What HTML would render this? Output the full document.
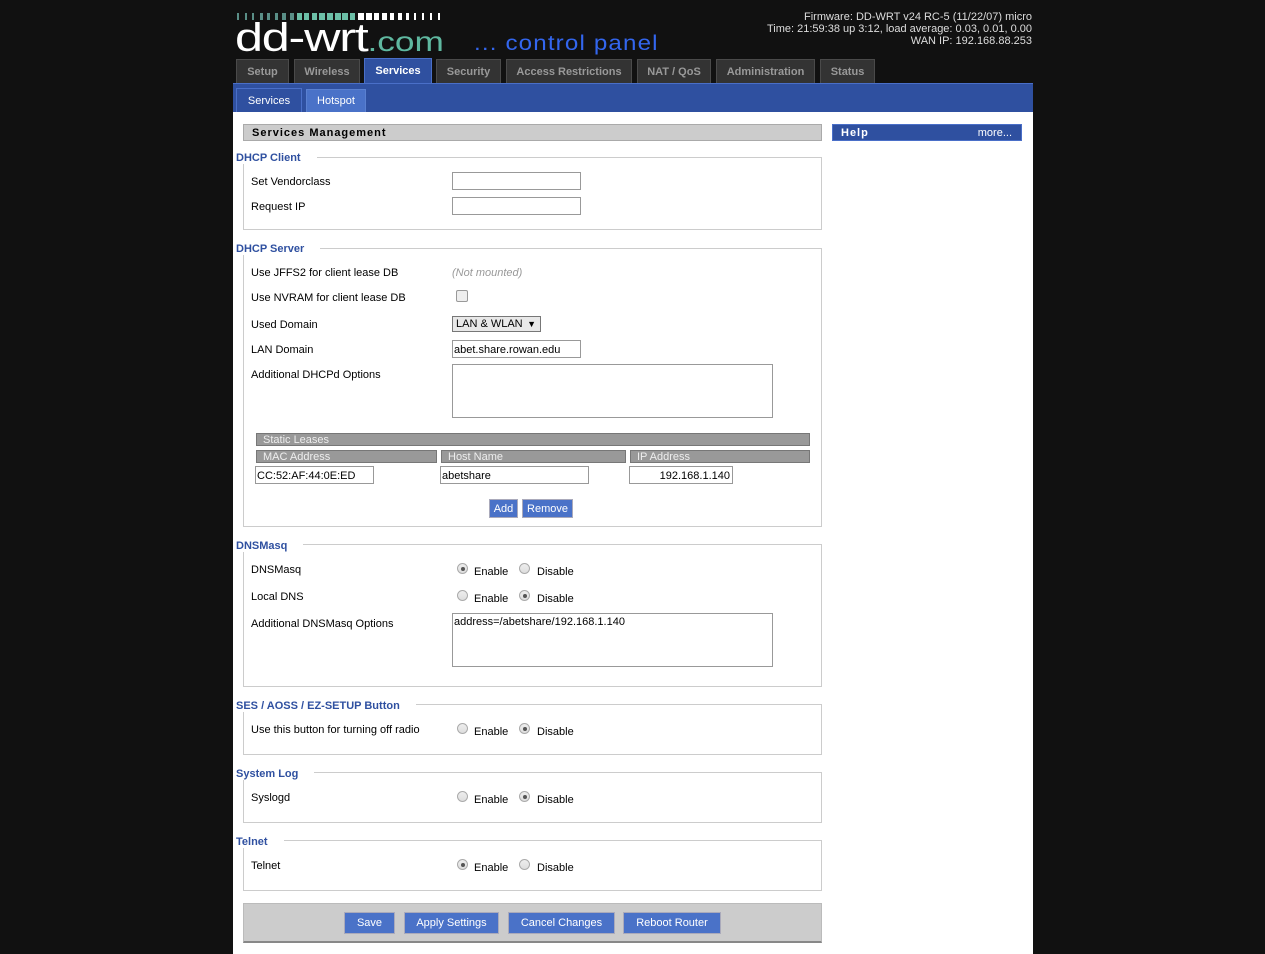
<!DOCTYPE html>
<html><head><meta charset="utf-8"><style>
body{margin:0;background:#111;width:1265px;height:954px;overflow:hidden;font-family:"Liberation Sans",Arial,sans-serif;font-size:11px;color:#000}
.a{position:absolute}
.tab{position:absolute;top:59px;height:24px;background:#333;border:1px solid #4a4a4a;border-bottom:none;box-sizing:border-box;color:#999;font-weight:bold;text-align:center;line-height:24px;font-size:11px}
.box{position:absolute;left:243px;width:579px;border:1px solid #ccc;box-sizing:border-box}
.lg{position:absolute;left:236px;color:#2f50a0;font-weight:bold;background:#fff;padding-right:16px;font-size:11px;margin-top:1px}
.lb{position:absolute;left:251px;font-size:11px;margin-top:1px}
.t{margin-top:1px}
.in{position:absolute;left:452px;width:129px;height:18px;border:1px solid #999;box-sizing:border-box;background:#fff;font-size:11px;line-height:18px;padding-left:1px}
.ta{position:absolute;left:452px;width:321px;height:54px;border:1px solid #999;box-sizing:border-box;background:#fff;font-size:11px;padding:2px 1px}
.r{position:absolute;width:11px;height:11px;border:1px solid #aaa;border-radius:50%;box-sizing:border-box;background:linear-gradient(#eee,#ddd)}
.r.on::after{content:"";position:absolute;left:2.5px;top:2.5px;width:4px;height:4px;border-radius:50%;background:#555}
.th{position:absolute;height:13px;background:#999;border:1px solid #777;box-sizing:border-box;color:#eee;line-height:13px;padding-left:6px;font-size:11px}
.btn{position:absolute;background:#4a72c8;color:#fff;border:1px solid #aab;box-sizing:border-box;text-align:center;font-size:11px}
</style></head><body>
<div class="a" style="left:237px;top:12px;height:9px;width:210px">
<svg width="210" height="9">
<g fill="#5a8f87">
<rect x="0" y="1" width="2" height="7"/><rect x="8" y="1" width="2" height="7"/><rect x="15" y="1" width="2" height="7"/><rect x="23" y="1" width="3" height="7"/><rect x="30" y="1" width="3" height="7"/><rect x="38" y="1" width="3" height="7"/><rect x="45" y="1" width="4" height="7"/><rect x="53" y="1" width="4" height="7"/>
</g>
<g fill="#6cbfa7">
<rect x="60" y="1" width="5" height="7"/><rect x="67" y="1" width="5" height="7"/><rect x="75" y="1" width="5" height="7"/><rect x="82" y="1" width="6" height="7"/><rect x="90" y="1" width="6" height="7"/><rect x="98" y="1" width="6" height="7"/><rect x="105" y="1" width="6" height="7"/><rect x="113" y="1" width="5" height="7"/>
</g>
<g fill="#fff">
<rect x="121" y="1" width="6" height="7"/><rect x="129" y="1" width="6" height="7"/><rect x="137" y="1" width="5" height="7"/><rect x="145" y="1" width="5" height="7"/><rect x="153" y="1" width="4" height="7"/><rect x="161" y="1" width="4" height="7"/><rect x="169" y="1" width="3" height="7"/><rect x="177" y="1" width="2" height="7"/><rect x="185" y="1" width="2" height="7"/><rect x="193" y="1" width="2" height="7"/><rect x="201" y="1" width="2" height="7"/>
</g></svg></div>
<div class="a" style="left:235px;top:16px;font-size:40px;color:#fff;letter-spacing:-1px;line-height:44px;transform:scaleX(1.26);transform-origin:0 0;white-space:nowrap">dd-wrt<span style="color:#5fb8a0;font-size:28px;letter-spacing:0">.com</span></div>
<div class="a" style="left:474px;top:31px;font-size:21px;color:#3366ee;line-height:26px;letter-spacing:1px;transform:scaleX(1.15);transform-origin:0 0;white-space:nowrap">... control panel</div>
<div class="a" style="right:233px;top:11px;color:#ddd;text-align:right;line-height:12px;font-size:11px">Firmware: DD-WRT v24 RC-5 (11/22/07) micro<br>Time: 21:59:38 up 3:12, load average: 0.03, 0.01, 0.00<br>WAN IP: 192.168.88.253</div>
<div class="tab" style="left:236px;width:53px">Setup</div>
<div class="tab" style="left:294px;width:66px">Wireless</div>
<div class="tab" style="left:364px;width:68px;top:58px;height:25px;background:#2f50a0;border-color:#4a6fc8;color:#fff">Services</div>
<div class="tab" style="left:436px;width:65px">Security</div>
<div class="tab" style="left:506px;width:126px">Access Restrictions</div>
<div class="tab" style="left:637px;width:74px">NAT / QoS</div>
<div class="tab" style="left:716px;width:99px">Administration</div>
<div class="tab" style="left:820px;width:55px">Status</div>
<div class="a" style="left:233px;top:83px;width:800px;height:29px;background:#2f50a0;border-top:1px solid #4a6fc8;box-sizing:border-box"></div>
<div class="a" style="left:236px;top:88px;width:66px;height:24px;background:#2f50a0;border:1px solid #4a6fc8;border-bottom:none;box-sizing:border-box;color:#fff;text-align:center;line-height:24px">Services</div>
<div class="a" style="left:306px;top:89px;width:60px;height:23px;background:#4a72c8;border:1px solid #5a80d0;border-bottom:none;box-sizing:border-box;color:#fff;text-align:center;line-height:23px">Hotspot</div>
<div class="a" style="left:233px;top:112px;width:800px;height:842px;background:#fff"></div>
<div class="a" style="left:243px;top:124px;width:579px;height:17px;background:#ccc;border:1px solid #aaa;box-sizing:border-box;font-weight:bold;letter-spacing:1px;line-height:16px;padding-left:8px">Services Management</div>
<div class="a" style="left:832px;top:124px;width:190px;height:17px;background:#2f50a0;border:1px solid #4a6fc8;box-sizing:border-box;color:#fff;line-height:16px;padding-left:8px"><b style="letter-spacing:1px">Help</b><span style="position:absolute;right:9px">more...</span></div>

<div class="box" style="top:157px;height:73px"></div>
<div class="lg" style="top:151px">DHCP Client</div>
<div class="lb" style="top:175px">Set Vendorclass</div><div class="in" style="top:172px"></div>
<div class="lb" style="top:200px">Request IP</div><div class="in" style="top:197px"></div>

<div class="box" style="top:248px;height:279px"></div>
<div class="lg" style="top:242px">DHCP Server</div>
<div class="lb" style="top:266px">Use JFFS2 for client lease DB</div>
<div class="a t" style="left:452px;top:266px;color:#999;font-style:italic">(Not mounted)</div>
<div class="lb" style="top:291px">Use NVRAM for client lease DB</div>
<div class="a" style="left:456px;top:290px;width:12px;height:12px;border:1px solid #999;border-radius:2px;box-sizing:border-box;background:#eee"></div>
<div class="lb" style="top:318px">Used Domain</div>
<div class="a" style="left:452px;top:316px;width:89px;height:16px;border:1px solid #777;box-sizing:border-box;background:#e8e8e8;line-height:15px;padding-left:3px">LAN &amp; WLAN <span style="font-size:9px;position:absolute;right:4px">▼</span></div>
<div class="lb" style="top:343px">LAN Domain</div><div class="in" style="top:340px">abet.share.rowan.edu</div>
<div class="lb" style="top:368px">Additional DHCPd Options</div><div class="ta" style="top:364px"></div>
<div class="th" style="left:256px;top:433px;width:554px">Static Leases</div>
<div class="th" style="left:256px;top:450px;width:181px">MAC Address</div>
<div class="th" style="left:441px;top:450px;width:185px">Host Name</div>
<div class="th" style="left:630px;top:450px;width:180px">IP Address</div>
<div class="in" style="left:255px;top:466px;width:119px">CC:52:AF:44:0E:ED</div>
<div class="in" style="left:440px;top:466px;width:149px">abetshare</div>
<div class="in" style="left:629px;top:466px;width:104px;text-align:right;padding-right:2px">192.168.1.140</div>
<div class="btn" style="left:489px;top:499px;width:29px;height:19px;line-height:18px">Add</div>
<div class="btn" style="left:522px;top:499px;width:51px;height:19px;line-height:18px">Remove</div>

<div class="box" style="top:544px;height:143px"></div>
<div class="lg" style="top:539px">DNSMasq</div>
<div class="lb" style="top:563px">DNSMasq</div>
<div class="r on" style="left:457px;top:563px"></div><div class="a t" style="left:474px;top:565px">Enable</div>
<div class="r" style="left:519px;top:563px"></div><div class="a t" style="left:537px;top:565px">Disable</div>
<div class="lb" style="top:590px">Local DNS</div>
<div class="r" style="left:457px;top:590px"></div><div class="a t" style="left:474px;top:592px">Enable</div>
<div class="r on" style="left:519px;top:590px"></div><div class="a t" style="left:537px;top:592px">Disable</div>
<div class="lb" style="top:617px">Additional DNSMasq Options</div>
<div class="ta" style="top:613px">address=/abetshare/192.168.1.140</div>

<div class="box" style="top:704px;height:51px"></div>
<div class="lg" style="top:699px">SES / AOSS / EZ-SETUP Button</div>
<div class="lb" style="top:723px">Use this button for turning off radio</div>
<div class="r" style="left:457px;top:723px"></div><div class="a t" style="left:474px;top:725px">Enable</div>
<div class="r on" style="left:519px;top:723px"></div><div class="a t" style="left:537px;top:725px">Disable</div>

<div class="box" style="top:772px;height:51px"></div>
<div class="lg" style="top:767px">System Log</div>
<div class="lb" style="top:791px">Syslogd</div>
<div class="r" style="left:457px;top:791px"></div><div class="a t" style="left:474px;top:793px">Enable</div>
<div class="r on" style="left:519px;top:791px"></div><div class="a t" style="left:537px;top:793px">Disable</div>

<div class="box" style="top:840px;height:51px"></div>
<div class="lg" style="top:835px">Telnet</div>
<div class="lb" style="top:859px">Telnet</div>
<div class="r on" style="left:457px;top:859px"></div><div class="a t" style="left:474px;top:861px">Enable</div>
<div class="r" style="left:519px;top:859px"></div><div class="a t" style="left:537px;top:861px">Disable</div>

<div class="a" style="left:243px;top:903px;width:579px;height:40px;background:#ccc;border:1px solid #bbb;border-bottom:2px solid #888;box-sizing:border-box"></div>
<div class="btn" style="left:344px;top:912px;width:51px;height:22px;line-height:21px">Save</div>
<div class="btn" style="left:404px;top:912px;width:95px;height:22px;line-height:21px">Apply Settings</div>
<div class="btn" style="left:508px;top:912px;width:107px;height:22px;line-height:21px">Cancel Changes</div>
<div class="btn" style="left:623px;top:912px;width:98px;height:22px;line-height:21px">Reboot Router</div>
</body></html>
